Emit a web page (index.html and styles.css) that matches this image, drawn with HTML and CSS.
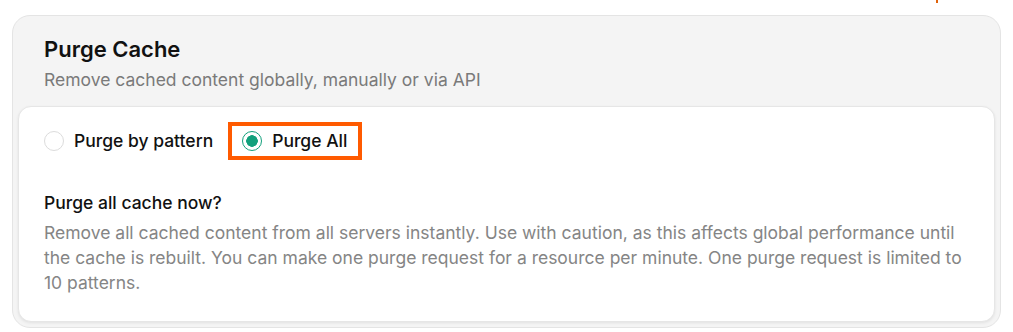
FILE: index.html
```html
<!DOCTYPE html>
<html>
<head>
<meta charset="utf-8">
<link rel="stylesheet" href="styles.css">
</head>
<body>
<div class="page">
  <span class="corner-mark"></span>
  <section class="card">
    <header class="card-head">
      <h2 class="title">Purge Cache</h2>
      <p class="subtitle">Remove cached content globally, manually or via API</p>
    </header>
    <div class="panel">
      <div class="radios">
        <label class="radio">
          <span class="dot"></span>
          <span class="radio-label">Purge by pattern</span>
        </label>
        <label class="radio radio-selected">
          <span class="dot dot-on"></span>
          <span class="radio-label">Purge All</span>
        </label>
      </div>
      <h3 class="q">Purge all cache now?</h3>
      <p class="desc">Remove all cached content from all servers instantly. Use with caution, as this affects global performance until the cache is rebuilt. You can make one purge request for a resource per minute. One purge request is limited to 10 patterns.</p>
    </div>
  </section>
</div>
</body>
</html>
```
FILE: styles.css
```css
* { box-sizing: border-box; }
html, body { margin: 0; padding: 0; background: #fff; }
body { font-family: Inter, "Noto Sans", sans-serif; color: #111; }
.page { position: relative; padding: 15px 12px 0 12px; width: 1013px; }
.corner-mark { position: absolute; left: 936px; top: 0; width: 2px; height: 3px; background: #e0620a; }
.card {
  background: #f4f4f4;
  border: 1px solid #e4e4e4;
  border-radius: 18px;
  padding: 0 5px 5px 5px;
  width: 989px;
}
.card-head { padding: 19px 26px 14px 26px; }
.title { margin: 0; font-size: 22px; line-height: 28px; font-weight: 600; color: #111; }
.subtitle { margin: 5px 0 0 0; font-size: 17.5px; line-height: 24px; color: #7a7a7a; }
.panel {
  background: #fff;
  border: 1px solid #e6e6e6;
  border-radius: 13px;
  box-shadow: 0 1px 3px rgba(0,0,0,0.08);
  padding: 15px 25px 26px 25px;
}
.radios { display: flex; align-items: center; gap: 15px; }
.radio { display: flex; align-items: center; gap: 10px; font-size: 17.5px; line-height: 20px; font-weight: 500; color: #111; }
.radio-selected { border: 4px solid #ff5a00; padding: 5px 11px 5px 10px; }
.dot { width: 20px; height: 20px; border-radius: 50%; border: 1px solid #dcdcdc; background: #fff; display: inline-block; flex: none; }
.dot-on { border: 1.5px solid #12a07c; background: radial-gradient(circle, #12a07c 0 5.5px, #fff 6px); }
.q { margin: 31px 0 0 0; font-size: 17.5px; line-height: 24px; font-weight: 500; color: #111; }
.desc { margin: 5px 0 0 0; font-size: 17.5px; line-height: 25px; color: #858585; }
```
